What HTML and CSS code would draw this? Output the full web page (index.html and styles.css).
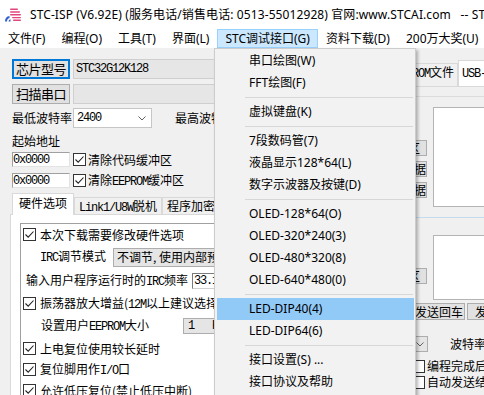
FILE: index.html
```html
<!DOCTYPE html>
<html><head><meta charset="utf-8"><link rel="stylesheet" href="styles.css"></head>
<body>
<div class="win">
  <div class="titlebar ui">
    <svg class="appicon" viewBox="0 0 18 15">
      <g fill="#e2457c">
        <rect x="6" y="1.5" width="8" height="1.4" rx="0.7"/>
        <rect x="6" y="4.3" width="10" height="1.4" rx="0.7"/>
        <rect x="6" y="7.1" width="11" height="1.4" rx="0.7"/>
        <rect x="8" y="9.9" width="9" height="1.4" rx="0.7"/>
        <rect x="9" y="12.6" width="8" height="1.4" rx="0.7"/>
      </g>
      <path d="M1 14.5 Q1 9.5 5.5 9 L5.5 11 Q3 11.5 3 14.5 Z" fill="#2f5fd0"/>
      <path d="M4.5 14.5 Q4.5 12.6 6.5 12.3 L6.5 14.5 Z" fill="#2f5fd0"/>
    </svg>
    <span class="title">STC-ISP (V6.92E) (服务电话/销售电话: 0513-55012928) 官网:www.STCAI.com&nbsp;&nbsp;&nbsp;-- STC-ISP</span>
  </div>
  <div class="menubar ui">
    <span class="mi">文件(F)</span><span class="mi">编程(O)</span><span class="mi">工具(T)</span><span class="mi">界面(L)</span><span class="mi open">STC调试接口(G)</span><span class="mi">资料下载(D)</span><span class="mi">200万大奖(U)</span>
  </div>
  <div class="body">
    <div class="left">
      <div class="top">
        <div class="row">
          <span class="btn default">芯片型号</span><span class="field"><span class="m">STC32G12K128</span></span>
        </div>
        <div class="row row-scan">
          <span class="btn">扫描串口</span><span class="field"></span>
        </div>
        <div class="row row-baud">
          <span class="baud-lbl">最低波特率</span>
          <span class="combo baud-combo"><span class="m">2400</span><svg class="chev" viewBox="0 0 8 5"><path d="M0.5 0.5 L4 4 L7.5 0.5"/></svg></span>
          <span class="maxbaud">最高波特率</span>
        </div>
        <div class="addr">起始地址</div>
        <div class="hexrow hexrow-1">
          <span class="hex"><span class="m">0x0000</span></span>
          <span class="cb"><svg viewBox="0 0 11 11"><path d="M1.5 5.5 L4.2 8.2 L9.5 2.5"/></svg></span>
          <span class="cbl">清除代码缓冲区</span>
        </div>
        <div class="hexrow hexrow-2">
          <span class="hex"><span class="m">0x0000</span></span>
          <span class="cb"><svg viewBox="0 0 11 11"><path d="M1.5 5.5 L4.2 8.2 L9.5 2.5"/></svg></span>
          <span class="cbl">清除<span class="m">EEPROM</span>缓冲区</span>
        </div>
      </div>
      <div class="tabs">
        <span class="tab active">硬件选项</span><span class="tab"><span class="m">Link1/U8W</span>脱机</span><span class="tab">程序加密后传输</span>
      </div>
      <div class="panel">
        <div class="group">
          <div class="g-chk">
            <span class="cb"><svg viewBox="0 0 11 11"><path d="M1.5 5.5 L4.2 8.2 L9.5 2.5"/></svg></span>
            <span class="g-lbl">本次下载需要修改硬件选项</span>
          </div>
          <div class="g-fld">
            <span class="irc-lbl"><span class="m">IRC</span>调节模式</span>
            <span class="gcombo irc-combo">不调节,&nbsp;使用内部预设<span class="m">IRC</span>频率</span>
          </div>
          <div class="g-fld">
            <span class="freq-lbl">输入用户程序运行时的<span class="m">IRC</span>频率</span>
            <span class="tbox"><span class="m">33.1776</span></span>
          </div>
          <div class="g-chk">
            <span class="cb"><svg viewBox="0 0 11 11"><path d="M1.5 5.5 L4.2 8.2 L9.5 2.5"/></svg></span>
            <span class="g-lbl">振荡器放大增益(<span class="m">12M</span>以上建议选择)</span>
          </div>
          <div class="g-fld">
            <span class="eep-lbl">设置用户<span class="m">EEPROM</span>大小</span>
            <span class="gcombo eep-combo"><span class="m">1&nbsp;&nbsp;&nbsp;K</span></span>
          </div>
          <div class="g-chk">
            <span class="cb"><svg viewBox="0 0 11 11"><path d="M1.5 5.5 L4.2 8.2 L9.5 2.5"/></svg></span>
            <span class="g-lbl">上电复位使用较长延时</span>
          </div>
          <div class="g-chk">
            <span class="cb"><svg viewBox="0 0 11 11"><path d="M1.5 5.5 L4.2 8.2 L9.5 2.5"/></svg></span>
            <span class="g-lbl">复位脚用作<span class="m">I/O</span>口</span>
          </div>
          <div class="g-chk">
            <span class="cb"><svg viewBox="0 0 11 11"><path d="M1.5 5.5 L4.2 8.2 L9.5 2.5"/></svg></span>
            <span class="g-lbl">允许低压复位(禁止低压中断)</span>
          </div>
        </div>
      </div>
    </div>
    <div class="right">
      <div class="rtabs">
        <span class="rtab">程序文件</span><span class="rtab"><span class="m">EEPROM</span>文件</span><span class="rtab active"><span class="m">USB-CDC/</span>串口助手</span>
      </div>
      <div class="rsep1"></div>
      <div class="recv">
        <div class="sidebtns">
          <span class="sbtn">清空接收区</span>
          <span class="sbtn">复制接收数据</span>
          <span class="sbtn">保存接收数据</span>
        </div>
        <div class="wbox"></div>
      </div>
      <div class="rsep2"></div>
      <div class="sendarea">
        <div class="sidebtns">
          <span class="sbtn">清空发送区</span>
        </div>
        <div class="wbox"></div>
      </div>
      <div class="sendbtns">
        <span class="pbtn pbtn-cr">发送回车</span><span class="pbtn pbtn-data">发送数据</span>
      </div>
      <div class="baudrow">
        <span class="rcombo"><svg class="chev" viewBox="0 0 8 5"><path d="M0.5 0.5 L4 4 L7.5 0.5"/></svg></span>
        <span class="baudlbl">波特率</span>
      </div>
      <div class="rchk rchk-first"><span class="cb"></span><span class="rchk-lbl">编程完成后自动打开串口</span></div>
      <div class="rchk"><span class="cb"></span><span class="rchk-lbl">自动发送结束符</span></div>
    </div>
  </div>
  <div class="dropdown ui">
    <div class="dd-item">串口绘图(W)</div>
    <div class="dd-item">FFT绘图(F)</div>
    <div class="dd-sep"></div>
    <div class="dd-item">虚拟键盘(K)</div>
    <div class="dd-sep"></div>
    <div class="dd-item">7段数码管(7)</div>
    <div class="dd-item">液晶显示128*64(L)</div>
    <div class="dd-item">数字示波器及按键(D)</div>
    <div class="dd-sep"></div>
    <div class="dd-item">OLED-128*64(O)</div>
    <div class="dd-item">OLED-320*240(3)</div>
    <div class="dd-item">OLED-480*320(8)</div>
    <div class="dd-item">OLED-640*480(0)</div>
    <div class="dd-sep"></div>
    <div class="dd-item hl">LED-DIP40(4)</div>
    <div class="dd-item">LED-DIP64(6)</div>
    <div class="dd-sep"></div>
    <div class="dd-item">接口设置(S) ...</div>
    <div class="dd-item">接口协议及帮助</div>
  </div>
</div>
</body></html>
```
FILE: styles.css
```css
* { box-sizing: border-box; }
html, body { margin: 0; padding: 0; }
body {
  width: 484px; height: 395px; overflow: hidden;
  background: #f0f0f0; color: #000;
  font-family: "Noto Sans CJK SC", "Noto Sans", sans-serif;
  font-size: 12px; line-height: 14px;
}
.win { position: relative; width: 484px; height: 395px; overflow: hidden; }
.ui { font-family: "Noto Sans", "Noto Sans CJK SC", sans-serif; }
.m { font-family: "Liberation Mono", monospace; font-size: 12px; letter-spacing: -1.2px; }

.titlebar { height: 29px; background: #fff; display: flex; align-items: center; padding-left: 4px; white-space: nowrap; overflow: hidden; }
.appicon { width: 18px; height: 15px; flex: none; margin-right: 8px; }
.title { font-size: 12px; line-height: 16px; letter-spacing: 0.1px; }

.menubar { height: 19px; background: #fff; display: flex; white-space: nowrap; }
.mi { border: 1px solid transparent; padding: 0 7px; line-height: 17px; }
.mi.open { background: #cce8ff; border-color: #99d1ff; }

.body { display: flex; height: 347px; }

/* left column */
.left { width: 236px; flex: none; padding: 11px 0 0 10px; display: flex; flex-direction: column; }
.top { padding-left: 2px; display: flex; flex-direction: column; }
.row { display: flex; align-items: center; height: 20px; }
.row-scan { margin-top: 5px; }
.row-baud { margin-top: 4px; white-space: nowrap; }
.btn { flex: none; width: 58px; height: 20px; border: 1px solid #adadad; background: #e1e1e1; display: flex; align-items: center; justify-content: center; font-size: 13px; letter-spacing: -0.5px; }
.btn.default { border: 2px solid #0078d7; }
.field { flex: 1; height: 20px; margin-left: 3px; background: #e6e6e6; border: 1px solid #cfcfcf; display: flex; align-items: center; padding-left: 2px; }
.baud-lbl { width: 61px; flex: none; }
.combo { display: flex; align-items: center; justify-content: space-between; height: 20px; border: 1px solid #c6c6c6; background: #fff; padding: 0 5px 0 3px; }
.baud-combo { width: 79px; flex: none; }
.chev { width: 8px; height: 5px; }
.chev path { fill: none; stroke: #606060; stroke-width: 1; }
.maxbaud { margin-left: 23px; }
.addr { margin-top: 6px; height: 14px; line-height: 14px; }
.hexrow { display: flex; align-items: center; height: 15px; white-space: nowrap; }
.hexrow-1 { margin-top: 4px; }
.hexrow-2 { margin-top: 6px; }
.hex { width: 58px; height: 15px; flex: none; background: #fff; border: 1px solid; border-color: #a0a0a0 #e3e3e3 #e3e3e3 #a0a0a0; display: flex; align-items: center; }
.cb { width: 13px; height: 13px; flex: none; border: 1px solid #333; background: #fff; display: flex; align-items: center; justify-content: center; }
.cb svg { width: 11px; height: 11px; }
.cb path { fill: none; stroke: #222; stroke-width: 1.1; }
.hexrow .cb { margin-left: 3px; }
.cbl { margin-left: 2px; }

.tabs { margin-top: 5px; height: 21px; display: flex; align-items: flex-end; padding-left: 2px; white-space: nowrap; }
.tab { height: 17px; border: 1px solid #d9d9d9; border-bottom: none; padding: 0 4px; line-height: 16px; background: #f0f0f0; }
.tab.active { height: 22px; margin-bottom: -1px; background: #fff; position: relative; z-index: 1; line-height: 18px; padding: 0 6px; }
.panel { flex: 1; background: #fff; border: 1px solid #d9d9d9; padding: 8px 0 0 9px; }
.group { height: 100%; border-top: 1px solid #a0a0a0; border-left: 1px solid #a0a0a0; padding-left: 2px; display: flex; flex-direction: column; white-space: nowrap; }
.g-chk { height: 21px; flex: none; display: flex; align-items: center; }
.g-lbl { margin-left: 4px; }
.g-fld { height: 24px; flex: none; display: flex; align-items: center; }
.gcombo { flex: 1; background: #e5e5e5; border: 1px solid #adadad; display: flex; align-items: center; overflow: hidden; }
.irc-lbl { margin-left: 17px; }
.irc-combo { margin-left: 7px; height: 19px; padding-left: 3px; }
.freq-lbl { margin-left: 3px; }
.tbox { flex: 1; margin-left: 4px; height: 16px; background: #fff; border: 1px solid; border-color: #7a7a7a #d0d0d0 #d0d0d0 #7a7a7a; display: flex; align-items: center; padding-left: 1px; overflow: hidden; }
.eep-lbl { margin-left: 18px; }
.eep-combo { margin-left: 34px; height: 16px; padding-left: 4px; }

/* right column */
.right { flex: 1; display: flex; flex-direction: column; white-space: nowrap; }
.rtabs { margin-top: 12px; height: 27px; display: flex; align-items: flex-end; padding-left: 98px; border-bottom: 1px solid #d9d9d9; }
.rtab { height: 23px; padding: 0 3px; border: 1px solid #d9d9d9; border-bottom: none; background: #f0f0f0; line-height: 16px; }
.rtab.active { height: 26px; background: #fff; line-height: 22px; }
.rsep1 { margin-top: 9px; height: 1px; background: #dcdcdc; }
.recv { margin-top: 10px; height: 100px; display: flex; }
.sidebtns { width: 191px; flex: none; display: flex; flex-direction: column; align-items: flex-end; padding-top: 33px; gap: 5px; }
.sbtn { width: 74px; height: 16px; border: 1px solid #adadad; background: #e1e1e1; line-height: 14px; text-align: center; overflow: hidden; }
.wbox { flex: 1; margin-left: 6px; background: #fff; border: 1px solid #b4b4b4; }
.rsep2 { margin-top: 10px; height: 1px; background: #c6dcec; }
.sendarea { margin-top: 17px; height: 65px; display: flex; }
.sendbtns { margin-top: 3px; height: 17px; display: flex; gap: 2px; padding-left: 177px; }
.pbtn { height: 17px; border: 1px solid #adadad; background: #e1e1e1; line-height: 15px; text-align: center; flex: none; }
.pbtn-cr { width: 52px; }
.pbtn-data { width: 64px; }
.baudrow { margin-top: 16px; height: 16px; display: flex; align-items: center; }
.rcombo { margin-left: 114px; width: 78px; height: 16px; background: #e5e5e5; border: 1px solid #adadad; display: flex; align-items: center; justify-content: flex-end; padding-right: 3px; }
.baudlbl { margin-left: 22px; }
.rchk { height: 16px; display: flex; align-items: center; padding-left: 176px; }
.rchk-first { margin-top: 6px; }
.rchk-lbl { margin-left: 2px; }

/* dropdown menu */
.dropdown { position: absolute; left: 214px; top: 48px; width: 202px; background: #f2f2f2; border: 1px solid #cccccc; padding: 1px 1px 3px 2px; box-shadow: 2px 2px 3px rgba(0,0,0,0.28); z-index: 5; }
.dd-item { height: 22px; line-height: 22px; padding-left: 32px; white-space: nowrap; }
.dd-item.hl { background: #91c9f7; }
.dd-sep { height: 1px; margin: 3px 1px 3px 28px; background: #d7d7d7; }
```
